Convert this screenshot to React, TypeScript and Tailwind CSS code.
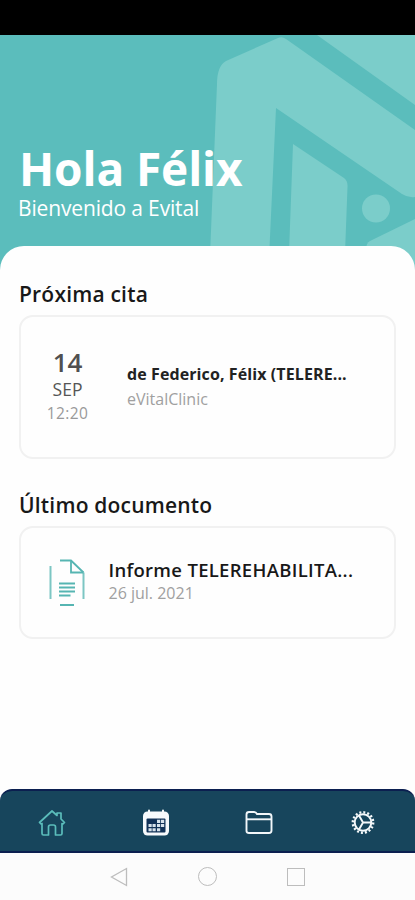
import React from "react";

function HeaderArt() {
  return (
    <svg className="absolute inset-0 h-full w-full" viewBox="0 35 415 245" fill="#7bcdca" aria-hidden="true">
      <path d="M278 38 Q282 36 286 39 L415 130 V197 Q408 198 402 194 L276 108 L268 280 H209 L217 84 Q217 66 226 61 Z" />
      <path d="M317 35 H415 V105 Z" />
      <path d="M293 144 L344 178 Q348 181 347.500 187 L344 280 H288 Z" />
      <circle cx="376" cy="208.500" r="14" />
      <path d="M415 219 L370 241 Q366 243 366 250 V280 H415 Z" />
    </svg>
  );
}

function DocumentIcon() {
  return (
    <svg className="h-[48px] w-[36px] shrink-0" viewBox="0 0 36 48" fill="none" stroke="#56b5b2" strokeWidth="1.800">
      <path d="M11 1.500 H22 L34.500 13.500" />
      <path d="M1.500 7 V40 M34.500 13.500 V40" stroke="#7cc6c3" strokeWidth="2" />
      <path d="M11 46 H25" strokeWidth="2" />
      <path d="M22 1.500 V13.500 H34.500" />
      <path d="M10 24.500 H26 M10 28.500 H26 M10 32.500 H26 M10 36.500 H21.500" />
    </svg>
  );
}

function HomeIcon() {
  return (
    <svg className="h-[28px] w-[28px]" viewBox="0 0 28 28" fill="none" stroke="#5bbdbb" strokeWidth="1.700" strokeLinejoin="round" strokeLinecap="round">
      <path d="M14 2 L1.500 13.500 L3 15 L4 14.500 V24.500 Q4 26 5.500 26 H10.500 V18 Q10.500 16 12.500 16 H15.500 Q17.500 16 17.500 18 V26 H22.500 Q24 26 24 24.500 V14.500 L25 15 L26.500 13.500 L23 10 V4 H19 V6.500 Z" />
    </svg>
  );
}

function CalendarIcon() {
  return (
    <svg className="h-[28px] w-[28px]" viewBox="0 0 28 28" fill="none">
      <rect x="1" y="2.500" width="26" height="24" rx="4.500" fill="#f7fafc" />
      <path d="M7 1.500 V4 M21 1.500 V4" stroke="#f7fafc" strokeWidth="2" strokeLinecap="round" />
      <rect x="4.500" y="9.500" width="19" height="14" rx="1" fill="#123257" />
      <path d="M15 10.800h3.200v3.200H15z M19 10.800h3.200v3.200H19z M6.500 15h3.200v3H6.500z M10.500 15h3.200v3H10.500z M15 15h3.200v3H15z M19 15h3.200v3H19z M6.500 19.200h3.200v3H6.500z M10.500 19.200h3.200v3H10.500z M15 19.200h3.200v3H15z" fill="#d7e2eb" />
    </svg>
  );
}

function FolderIcon() {
  return (
    <svg className="h-[28px] w-[28px]" viewBox="0 0 28 28" fill="none" stroke="#f2f7fa" strokeWidth="1.900" strokeLinejoin="round">
      <path d="M1.500 22 V5.500 Q1.500 3 4 3 H9 Q11 3 12 5 H24 Q26.500 5 26.500 7.500 V21.500 Q26.500 24 24 24 H4 Q1.500 24 1.500 22 Z" />
      <path d="M2 10.300 H26" />
    </svg>
  );
}

function GearIcon() {
  return (
    <svg className="h-[28px] w-[28px]" viewBox="0 0 28 28" fill="none" stroke="#f5f9fb">
      <circle cx="14" cy="13.500" r="10.200" strokeWidth="2.400" strokeDasharray="2 2.006" />
      <circle cx="14" cy="13.500" r="8.300" strokeWidth="2" />
      <path d="M14 13.500 H22 M14 13.500 L10 6.500 M14 13.500 L10 20.500" strokeWidth="1.900" />
    </svg>
  );
}

export default function App() {
  return (
    <div className="flex h-[900px] w-[415px] flex-col overflow-hidden bg-[#fefefe] font-['Open_Sans','Noto_Sans',sans-serif]">
      <div className="h-[35px] shrink-0 bg-black" />
      <header className="relative h-[245px] shrink-0 bg-[#5bbdbc] pl-[18px] pt-[104px] text-white">
        <HeaderArt />
        <h1 className="relative ml-px whitespace-nowrap text-[46px] font-bold leading-[58px] tracking-[-0.1px]">Hola Félix</h1>
        <p className="relative whitespace-nowrap text-[21px] leading-[23px] tracking-[-0.15px]">Bienvenido a Evital</p>
      </header>
      <main className="relative -mt-[34px] flex grow flex-col rounded-t-[24px] bg-[#fefefe] px-[19px] pt-[34px]">
        <h2 className="whitespace-nowrap text-[21px] font-semibold leading-[28px] tracking-[0.2px] text-[#181818]">Próxima cita</h2>
        <section className="mt-[7px] flex h-[144px] shrink-0 items-center rounded-[14px] border-[2.500px] border-[#f1f1f1]">
          <div className="flex w-[93px] shrink-0 flex-col items-center pb-[2px]">
            <span className="text-[26px] font-semibold leading-[30px] text-[#505050]">14</span>
            <span className="text-[17.500px] leading-[24px] text-[#555555]">SEP</span>
            <span className="text-[15.500px] leading-[25px] tracking-[0.4px] text-[#999999]">12:20</span>
          </div>
          <div className="ml-[13px]">
            <h3 className="whitespace-nowrap text-[16px] font-bold leading-[25px] tracking-[0.1px] text-[#222222]">de Federico, Félix (TELERE...</h3>
            <p className="text-[16px] leading-[25px] text-[#a0a0a0]">eVitalClinic</p>
          </div>
        </section>
        <h2 className="mt-[32px] whitespace-nowrap text-[21px] font-semibold leading-[28px] tracking-[0.2px] text-[#181818]">Último documento</h2>
        <section className="mt-[7px] flex h-[113px] shrink-0 items-center rounded-[14px] border-[2.500px] border-[#f1f1f1] pl-[28px]">
          <DocumentIcon />
          <div className="ml-[23.500px] pb-[4px]">
            <h3 className="whitespace-nowrap text-[18.500px] font-semibold leading-[24px] tracking-[0.3px] text-[#181818]">Informe TELEREHABILITA...</h3>
            <p className="text-[16px] leading-[22px] text-[#a0a0a0]">26 jul. 2021</p>
          </div>
        </section>
      </main>
      <nav className="flex h-[64px] shrink-0 items-center justify-around rounded-t-[12px] border-y-2 border-[#0b1f50] bg-[#17455c] pt-[3px]">
        <HomeIcon />
        <CalendarIcon />
        <FolderIcon />
        <GearIcon />
      </nav>
      <footer className="flex h-[47px] shrink-0 items-center justify-center gap-[70px] bg-[#fcfcfc]">
        <svg className="h-[20px] w-[18px]" viewBox="0 0 18 20" fill="none" stroke="#bdbdbd" strokeWidth="1.300">
          <path d="M16.500 1.500 V18.500 L1.500 10 Z" />
        </svg>
        <div className="size-[19px] rounded-full border border-[#bdbdbd]" />
        <div className="size-[18px] border border-[#bdbdbd]" />
      </footer>
    </div>
  );
}
